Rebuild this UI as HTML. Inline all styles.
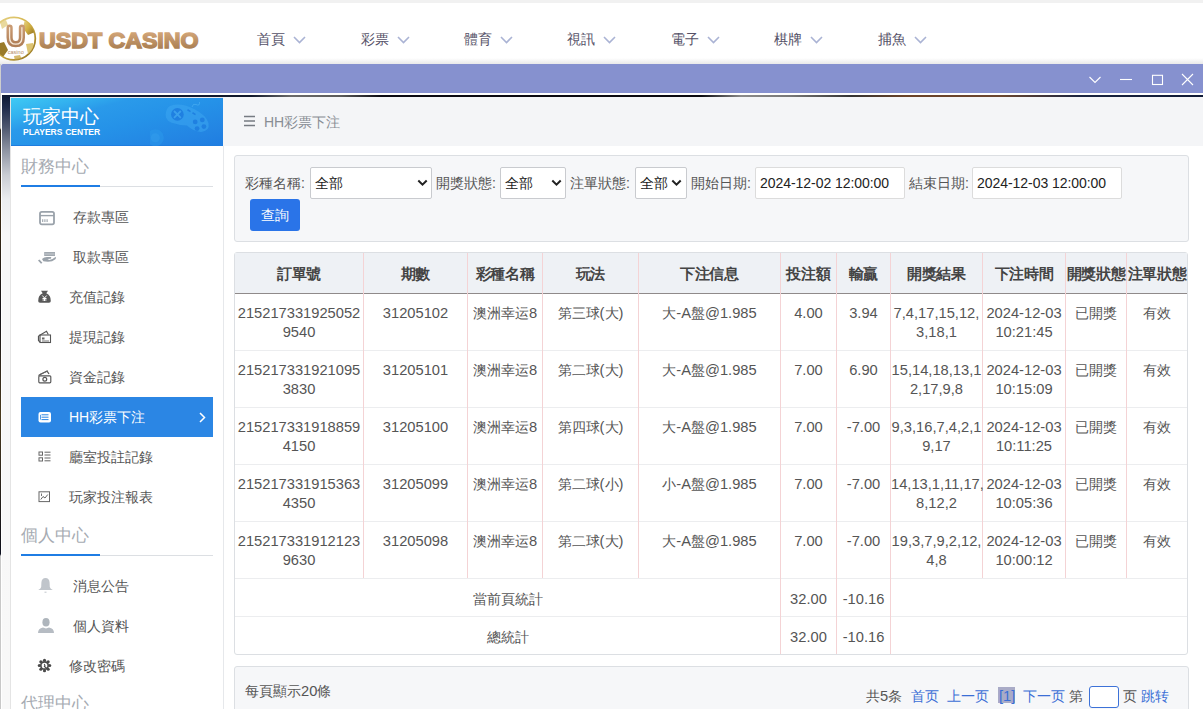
<!DOCTYPE html>
<html><head><meta charset="utf-8"><style>
*{box-sizing:border-box;margin:0;padding:0}
html,body{width:1203px;height:709px;overflow:hidden;background:#fff;font-family:"Liberation Sans",sans-serif;color:#333}
div,span,svg{position:absolute}
b.n{font-weight:inherit;font-size:14.7px;position:static}
.t{white-space:nowrap}
</style></head><body>
<div style="left:0;top:0;width:1203px;height:3px;background:#f1f1f1"></div>
<div style="left:0;top:58px;width:1203px;height:6px;background:linear-gradient(#fff,#e9e9e9)"></div>
<svg style="left:0;top:14px" width="210" height="50" viewBox="0 0 210 50">
<defs>
<linearGradient id="gold" x1="0" y1="0" x2="0" y2="1"><stop offset="0" stop-color="#dcae80"/><stop offset="1" stop-color="#9e7448"/></linearGradient>
<linearGradient id="ballg" x1="0" y1="0" x2="1" y2="1"><stop offset="0" stop-color="#e8d690"/><stop offset=".5" stop-color="#d2b144"/><stop offset="1" stop-color="#8a6a1c"/></linearGradient>
<clipPath id="bc"><circle cx="14" cy="24.6" r="21"/></clipPath><linearGradient id="ug" x1="0" y1="0" x2="0" y2="1"><stop offset="0" stop-color="#c99a72"/><stop offset="1" stop-color="#b07f58"/></linearGradient>
</defs>
<circle cx="14" cy="24.6" r="21.3" fill="#fff" stroke="url(#ballg)" stroke-width="1.8"/>
<g clip-path="url(#bc)"><path d="M25 5 L34 9 L35 18 L28 21 L23 14 Z" fill="url(#ballg)"/>
<path d="M-4 30 L4 28 L8 36 L3 43 L-4 40 Z" fill="#9a7a28"/>
<path d="M26 30 L33 29 L34 36 L28 40 Z" fill="#d9bf64" opacity=".9"/>
<path d="M0 8 L6 6 L8 11 L2 15 Z" fill="#e3cf86" opacity=".8"/>
<path d="M14 42 L20 41 L22 46 L15 47 Z" fill="#caa94a" opacity=".8"/></g>
<path d="M9.6 13.7 V23.5 Q9.6 30.2 15.75 30.2 Q21.9 30.2 21.9 23.5 V13.7" stroke="url(#ug)" stroke-width="6.2" fill="none" stroke-linecap="round"/>
<path d="M9.6 13.7 V23.5 Q9.6 30.2 15.75 30.2 Q21.9 30.2 21.9 23.5 V13.7" stroke="#f6eadb" stroke-width="1.3" fill="none" stroke-linecap="round"/>
<text x="15.75" y="39.5" font-size="5.5" fill="#b58a62" text-anchor="middle" font-family="Liberation Sans">casino</text>
<text x="39" y="34.4" font-family="Liberation Sans" font-weight="bold" font-size="22" fill="url(#gold)" stroke="url(#gold)" stroke-width="1.5" textLength="159.5" lengthAdjust="spacingAndGlyphs">USDT CASINO</text>
</svg>
<span class="t" style="left:257px;top:30px;font-size:14px;line-height:18px;color:#555167">首頁</span>
<svg style="left:293px;top:36px" width="13" height="8" viewBox="0 0 13 8"><path d="M1 1 L6.5 6.5 L12 1" stroke="#aab3d4" stroke-width="1.6" fill="none"/></svg>
<span class="t" style="left:361px;top:30px;font-size:14px;line-height:18px;color:#555167">彩票</span>
<svg style="left:397px;top:36px" width="13" height="8" viewBox="0 0 13 8"><path d="M1 1 L6.5 6.5 L12 1" stroke="#aab3d4" stroke-width="1.6" fill="none"/></svg>
<span class="t" style="left:464px;top:30px;font-size:14px;line-height:18px;color:#555167">體育</span>
<svg style="left:500px;top:36px" width="13" height="8" viewBox="0 0 13 8"><path d="M1 1 L6.5 6.5 L12 1" stroke="#aab3d4" stroke-width="1.6" fill="none"/></svg>
<span class="t" style="left:567px;top:30px;font-size:14px;line-height:18px;color:#555167">視訊</span>
<svg style="left:603px;top:36px" width="13" height="8" viewBox="0 0 13 8"><path d="M1 1 L6.5 6.5 L12 1" stroke="#aab3d4" stroke-width="1.6" fill="none"/></svg>
<span class="t" style="left:671px;top:30px;font-size:14px;line-height:18px;color:#555167">電子</span>
<svg style="left:707px;top:36px" width="13" height="8" viewBox="0 0 13 8"><path d="M1 1 L6.5 6.5 L12 1" stroke="#aab3d4" stroke-width="1.6" fill="none"/></svg>
<span class="t" style="left:774px;top:30px;font-size:14px;line-height:18px;color:#555167">棋牌</span>
<svg style="left:810px;top:36px" width="13" height="8" viewBox="0 0 13 8"><path d="M1 1 L6.5 6.5 L12 1" stroke="#aab3d4" stroke-width="1.6" fill="none"/></svg>
<span class="t" style="left:878px;top:30px;font-size:14px;line-height:18px;color:#555167">捕魚</span>
<svg style="left:914px;top:36px" width="13" height="8" viewBox="0 0 13 8"><path d="M1 1 L6.5 6.5 L12 1" stroke="#aab3d4" stroke-width="1.6" fill="none"/></svg>
<div style="left:0;top:64px;width:1px;height:645px;background:linear-gradient(#d0d0d0 0,#c8c8c8 64px,#2a2116 66px,#3a2a14 150px,#16141a 250px,#4a3a1e 350px,#101018 480px,#0c1020 490px,#c8c8c8 492px,#c8c8c8 645px)"></div>
<div style="left:1px;top:64px;width:1202px;height:30px;background:#8691cf;border-top-left-radius:2px"></div>
<div style="left:1px;top:93px;width:1202px;height:2px;background:#fff"></div>
<svg style="left:1085px;top:70px" width="118" height="20" viewBox="0 0 118 20">
<path d="M4.5 7 L10 12.5 L15.5 7" stroke="#fff" stroke-width="1.1" fill="none"/>
<path d="M35 9.5 H47" stroke="#fff" stroke-width="1.1"/>
<rect x="67.5" y="5.3" width="10" height="9.2" stroke="#fff" stroke-width="1.1" fill="none"/>
<path d="M97 4 L108 15 M108 4 L97 15" stroke="#fff" stroke-width="1.1"/>
</svg>
<div style="left:1px;top:95px;width:1202px;height:2px;background:linear-gradient(90deg,#0f1a33 0,#10182c 250px,#6a6a6a 290px,#5a5a5a 340px,#0a0a12 380px,#0a0a10 700px,#8a8a8a 740px,#777 790px,#333 850px,#6a4228 905px,#6a4630 1000px,#1a2440 1080px,#0f1a36 1202px)"></div>
<div style="left:1px;top:95px;width:1px;height:614px;background:#fff"></div>
<div style="left:2px;top:95px;width:8px;height:614px;background:linear-gradient(#0d1833 0,#1e2a4a 12px,#4d566e 32px,#8d93a2 55px,#c9ccd3 80px,#eceef0 105px,#f7f7f8 140px,#f8f8f8 614px)"></div>
<div style="left:10px;top:97px;width:214px;height:612px;background:#fff;border-left:1px solid #e4e4e4;border-right:1px solid #e6e8eb"></div>
<div style="left:10px;top:97px;width:213px;height:1px;background:#e8eaee"></div><div style="left:11px;top:98px;width:212px;height:48px;background:linear-gradient(165deg,#3fcaf4 0%,#33b2ef 18%,#2a9aea 32%,#2592e8 55%,#2384e3 85%,#1f7de1 100%);border-bottom:1px solid #1f7ddf"></div>
<svg style="left:150px;top:97px" width="73" height="49" viewBox="0 0 73 49">
<path d="M20 9 Q30 5 44 12 Q56 18 58.5 26 Q60 34 51 35 Q43 34 37 28.5 Q28 28 21 25.5 Q14 22 16 15 Q17 10.5 20 9 Z" fill="#3da6f0" opacity=".55"/>
<circle cx="27.4" cy="17.4" r="6.3" fill="#1f80e1"/>
<path d="M24 14 L30.8 20.8 M30.8 14 L24 20.8" stroke="#3a9fec" stroke-width="1.8"/>
<g fill="#1f80e1"><circle cx="45.2" cy="24.9" r="2.4"/><circle cx="52.3" cy="22.9" r="2.4"/><circle cx="47.1" cy="31.6" r="2.4"/><circle cx="53.9" cy="29.6" r="2.4"/></g>
<path d="M37.5 12.8 L40.5 14.6 M42.5 15.8 L45.5 17.6" stroke="#1f80e1" stroke-width="1.6"/>
<path d="M42 10 Q43 6 46 7.5 Q50 9.5 49.5 5" stroke="#49aef2" stroke-width="1" fill="none" opacity=".7"/>
<circle cx="5.3" cy="40.7" r="8.5" fill="#2d9bec" opacity=".45"/>
<circle cx="5.3" cy="40.7" r="4.5" fill="#3aa4ee" opacity=".35"/>
</svg>
<span class="t" style="left:23px;top:105px;font-size:19px;line-height:24px;color:#fff">玩家中心</span>
<span class="t" style="left:23px;top:127px;font-size:8.5px;line-height:10px;color:#fff;font-weight:bold;word-spacing:0.5px">PLAYERS CENTER</span>
<span class="t" style="left:21px;top:157px;font-size:17px;line-height:20px;color:#a6abb2">財務中心</span>
<div style="left:21px;top:186px;width:192px;height:1px;background:#dcdfe3"></div>
<div style="left:21px;top:185px;width:79px;height:2px;background:#1f7de4"></div>
<span class="t" style="left:21px;top:526px;font-size:17px;line-height:20px;color:#a6abb2">個人中心</span>
<div style="left:21px;top:555px;width:192px;height:1px;background:#dcdfe3"></div>
<div style="left:21px;top:554px;width:79px;height:2px;background:#1f7de4"></div>
<span class="t" style="left:21px;top:694px;font-size:17px;line-height:20px;color:#a6abb2">代理中心</span>
<svg style="left:38px;top:210px" width="18" height="16" viewBox="0 0 18 16"><rect x="2" y="1.8" width="14" height="12.5" rx="1.8" stroke="#9aa2aa" stroke-width="1.8" fill="none"/><path d="M2 5.6 H16" stroke="#9aa2aa" stroke-width="1.4"/><path d="M4.7 9.2 V12 M6.9 9.2 V12 M9.1 9.2 V12" stroke="#9aa2aa" stroke-width="1.1"/></svg>
<span class="t" style="left:73px;top:207px;font-size:14px;line-height:20px;color:#555">存款專區</span>
<svg style="left:37px;top:250px" width="20" height="16" viewBox="0 0 20 16"><rect x="7.2" y="2" width="10.8" height="4" fill="#a2a9b0"/><rect x="7.6" y="3.3" width="10" height="1.4" fill="#bcc2c8"/><path d="M5 9 Q7 7 10 6.9 L13.8 7.1 Q15 7.8 13.8 8.8 L10.5 9.1 Q11 9.9 12.5 9.9 Q15.5 9.6 18.4 7.1 Q19.8 7.6 18.4 9.3 Q15.5 11.8 11 11.8 Q8 11.6 6.3 11.3 Z" fill="#9aa2aa"/><path d="M1 10.4 L2.4 9.4 L5.4 12.7 L4 13.8 Z" fill="#9aa2aa"/></svg>
<span class="t" style="left:73px;top:247px;font-size:14px;line-height:20px;color:#555">取款專區</span>
<svg style="left:37px;top:290px" width="15" height="14" viewBox="0 0 15 14"><path d="M4 0.8 L11 0.8 L9.3 3.3 Q14 5.5 13.8 11 Q13.8 12.8 12 12.8 H3 Q1.2 12.8 1.2 11 Q1 5.5 5.7 3.3 Z" fill="#585858"/><path d="M5.3 5.5 L7.5 8 L9.7 5.5 M7.5 8 V11 M5.5 8.5 H9.5 M5.5 10 H9.5" stroke="#fff" stroke-width="1" fill="none"/></svg>
<span class="t" style="left:69px;top:287px;font-size:14px;line-height:20px;color:#555">充值記錄</span>
<svg style="left:37px;top:330px" width="15" height="14" viewBox="0 0 15 14"><path d="M1.5 6 L9.5 1.2 L11.3 4.5" stroke="#555" stroke-width="1.1" fill="none"/><rect x="3" y="5" width="10.5" height="7.5" stroke="#555" stroke-width="1.1" fill="none"/><path d="M1.5 6 V10.5 L3 12" stroke="#555" stroke-width="1.2" fill="none"/><rect x="5" y="7.5" width="2.5" height="2" fill="#666"/><path d="M5 11 H12" stroke="#777" stroke-width="1"/></svg>
<span class="t" style="left:69px;top:327px;font-size:14px;line-height:20px;color:#555">提現記錄</span>
<svg style="left:37px;top:370px" width="15" height="14" viewBox="0 0 15 14"><path d="M1.5 5.5 L10 1 L12 4" stroke="#555" stroke-width="1.3" fill="none"/><path d="M2.5 4.5 L11 1" stroke="#666" stroke-width="1" fill="none"/><rect x="1.8" y="5.8" width="12" height="7" rx="1" stroke="#555" stroke-width="1.15" fill="none"/><circle cx="7.8" cy="9.3" r="1.9" stroke="#555" stroke-width="1.2" fill="none"/></svg>
<span class="t" style="left:69px;top:367px;font-size:14px;line-height:20px;color:#555">資金記錄</span>
<div style="left:21px;top:397px;width:192px;height:40px;background:#2b86e4"></div>
<svg style="left:198px;top:412px" width="9" height="11" viewBox="0 0 9 11"><path d="M2 1 L6.5 5.5 L2 10" stroke="#fff" stroke-width="1.5" fill="none"/></svg>
<svg style="left:37px;top:411px" width="15" height="13" viewBox="0 0 15 13"><rect x="1.5" y="1" width="12.5" height="10.5" rx="2" fill="#fff"/><path d="M4.5 3.8 H11.5 M4.5 6.2 H11.5 M4.5 8.6 H11.5" stroke="#2b86e4" stroke-width="1"/><path d="M3.5 3.8 V8.6" stroke="#2b86e4" stroke-width="0.8"/></svg>
<span class="t" style="left:69px;top:407px;font-size:14px;line-height:20px;color:#fff">HH彩票下注</span>
<svg style="left:37px;top:450px" width="15" height="13" viewBox="0 0 15 13"><rect x="2" y="2" width="3.5" height="3.2" stroke="#666" stroke-width="1" fill="none"/><rect x="2" y="7.8" width="3.5" height="3.2" stroke="#666" stroke-width="1" fill="none"/><path d="M7.5 2.2 H13.5 M7.5 5 H13.5 M7.5 8 H13.5 M7.5 10.8 H13.5" stroke="#666" stroke-width="1"/></svg>
<span class="t" style="left:69px;top:447px;font-size:14px;line-height:20px;color:#555">廳室投註記錄</span>
<svg style="left:37px;top:490px" width="15" height="13" viewBox="0 0 15 13"><rect x="2" y="1.8" width="10.5" height="9.8" stroke="#666" stroke-width="1" fill="none"/><path d="M3.8 9.5 L6 6.5 L8 8 L10.8 4.5" stroke="#666" stroke-width="1" fill="none"/><path d="M4.5 3.5 V6" stroke="#666" stroke-width="0.9"/></svg>
<span class="t" style="left:69px;top:487px;font-size:14px;line-height:20px;color:#555">玩家投注報表</span>
<svg style="left:37px;top:577px" width="17" height="17" viewBox="0 0 17 17"><path d="M8.5 1 Q12.3 1 12.6 5.5 L12.8 10 Q13.3 12 15.8 13 H1.2 Q3.7 12 4.2 10 L4.4 5.5 Q4.7 1 8.5 1 Z" fill="#c0c5cb"/><path d="M7.5 15.2 H9.5" stroke="#c0c5cb" stroke-width="1"/></svg>
<span class="t" style="left:73px;top:576px;font-size:14px;line-height:20px;color:#555">消息公告</span>
<svg style="left:37px;top:617px" width="18" height="17" viewBox="0 0 18 17"><ellipse cx="9" cy="5.3" rx="3.6" ry="4.3" fill="#aeb5bc"/><path d="M1 16 Q1 11.5 6 10.6 L9 11.5 L12 10.6 Q17 11.5 17 16 Z" fill="#b6bcc3"/></svg>
<span class="t" style="left:73px;top:616px;font-size:14px;line-height:20px;color:#555">個人資料</span>
<svg style="left:37px;top:658px" width="15" height="15" viewBox="0 0 15 15"><g fill="#4a4a4a"><circle cx="7.50" cy="2.30" r="1.55"/><circle cx="11.18" cy="3.82" r="1.55"/><circle cx="12.70" cy="7.50" r="1.55"/><circle cx="11.18" cy="11.18" r="1.55"/><circle cx="7.50" cy="12.70" r="1.55"/><circle cx="3.82" cy="11.18" r="1.55"/><circle cx="2.30" cy="7.50" r="1.55"/><circle cx="3.82" cy="3.82" r="1.55"/></g><circle cx="7.5" cy="7.5" r="3.7" stroke="#4a4a4a" stroke-width="1.7" fill="#fff"/><path d="M7.2 6.2 Q8.5 7.5 7.5 8.5 L11 11.5" stroke="#4a4a4a" stroke-width="1.2" fill="none"/></svg>
<span class="t" style="left:69px;top:656px;font-size:14px;line-height:20px;color:#555">修改密碼</span>
<div style="left:223px;top:97px;width:980px;height:49px;background:#f4f5f7"></div>
<svg style="left:243px;top:115px" width="13" height="12" viewBox="0 0 13 12"><path d="M1 1.5 H12 M1 6 H12 M1 10.5 H12" stroke="#767b82" stroke-width="1.6"/></svg>
<span class="t" style="left:264px;top:112px;font-size:14px;line-height:20px;color:#888d94">HH彩票下注</span>
<div style="left:234px;top:155px;width:955px;height:87px;background:#f6f7f9;border:1px solid #dcdfe3;border-radius:3px"></div>
<span class="t" style="left:245px;top:173px;font-size:14px;line-height:20px;color:#555">彩種名稱:</span>
<div style="left:310px;top:167px;width:122px;height:32px;background:#fff;border:1px solid #c9cbcf;border-radius:2px"></div>
<span class="t" style="left:315px;top:173px;font-size:14px;line-height:20px;color:#222">全部</span>
<svg style="left:417px;top:179px" width="11" height="8" viewBox="0 0 11 8"><path d="M1.3 1.5 L5.5 5.7 L9.7 1.5" stroke="#222" stroke-width="2" fill="none"/></svg>
<span class="t" style="left:436px;top:173px;font-size:14px;line-height:20px;color:#555">開獎狀態:</span>
<div style="left:500px;top:167px;width:66px;height:32px;background:#fff;border:1px solid #c9cbcf;border-radius:2px"></div>
<span class="t" style="left:505px;top:173px;font-size:14px;line-height:20px;color:#222">全部</span>
<svg style="left:551px;top:179px" width="11" height="8" viewBox="0 0 11 8"><path d="M1.3 1.5 L5.5 5.7 L9.7 1.5" stroke="#222" stroke-width="2" fill="none"/></svg>
<span class="t" style="left:570px;top:173px;font-size:14px;line-height:20px;color:#555">注單狀態:</span>
<div style="left:635px;top:167px;width:52px;height:32px;background:#fff;border:1px solid #c9cbcf;border-radius:2px"></div>
<span class="t" style="left:640px;top:173px;font-size:14px;line-height:20px;color:#222">全部</span>
<svg style="left:671px;top:179px" width="11" height="8" viewBox="0 0 11 8"><path d="M1.3 1.5 L5.5 5.7 L9.7 1.5" stroke="#222" stroke-width="2" fill="none"/></svg>
<span class="t" style="left:691px;top:173px;font-size:14px;line-height:20px;color:#555">開始日期:</span>
<div style="left:755px;top:167px;width:150px;height:32px;background:#fff;border:1px solid #dcdcdc;border-radius:2px"></div>
<span class="t" style="left:760px;top:174px;font-size:14px;line-height:18px;color:#222;letter-spacing:-0.05px">2024-12-02 12:00:00</span>
<span class="t" style="left:909px;top:173px;font-size:14px;line-height:20px;color:#555">結束日期:</span>
<div style="left:972px;top:167px;width:150px;height:32px;background:#fff;border:1px solid #dcdcdc;border-radius:2px"></div>
<span class="t" style="left:977px;top:174px;font-size:14px;line-height:18px;color:#222;letter-spacing:-0.05px">2024-12-03 12:00:00</span>
<div style="left:250px;top:199px;width:50px;height:32px;background:#2a74e8;border-radius:3px"></div>
<span class="t" style="left:261px;top:205px;font-size:14px;line-height:20px;color:#fff">查詢</span>
<div style="left:234px;top:252px;width:954px;height:403px;background:#fff;border:1px solid #dcdfe3;border-radius:3px;overflow:hidden"></div>
<div style="left:235px;top:253px;width:952px;height:40px;background:#eef1f5"></div>
<div style="left:235px;top:293px;width:952px;height:1px;background:#8f8a8a"></div>
<div style="left:235px;top:350px;width:952px;height:1px;background:#ecedef"></div>
<div style="left:235px;top:407px;width:952px;height:1px;background:#ecedef"></div>
<div style="left:235px;top:464px;width:952px;height:1px;background:#ecedef"></div>
<div style="left:235px;top:521px;width:952px;height:1px;background:#ecedef"></div>
<div style="left:235px;top:578px;width:952px;height:1px;background:#ecedef"></div>
<div style="left:235px;top:616px;width:952px;height:1px;background:#ecedef"></div>
<div style="left:363px;top:253px;width:1px;height:325px;background:#f4d3d5"></div>
<div style="left:467px;top:253px;width:1px;height:325px;background:#f4d3d5"></div>
<div style="left:542px;top:253px;width:1px;height:325px;background:#f4d3d5"></div>
<div style="left:638px;top:253px;width:1px;height:325px;background:#f4d3d5"></div>
<div style="left:780px;top:253px;width:1px;height:401px;background:#f4d3d5"></div>
<div style="left:836px;top:253px;width:1px;height:401px;background:#f4d3d5"></div>
<div style="left:890px;top:253px;width:1px;height:401px;background:#f4d3d5"></div>
<div style="left:982px;top:253px;width:1px;height:325px;background:#f4d3d5"></div>
<div style="left:1065px;top:253px;width:1px;height:325px;background:#f4d3d5"></div>
<div style="left:1126px;top:253px;width:1px;height:325px;background:#f4d3d5"></div>
<div class="t" style="left:235px;top:264px;width:128px;text-align:center;font-size:15px;line-height:20px;font-weight:bold;color:#444;letter-spacing:-0.3px">訂單號</div>
<div class="t" style="left:364px;top:264px;width:103px;text-align:center;font-size:15px;line-height:20px;font-weight:bold;color:#444;letter-spacing:-0.3px">期數</div>
<div class="t" style="left:468px;top:264px;width:74px;text-align:center;font-size:15px;line-height:20px;font-weight:bold;color:#444;letter-spacing:-0.3px">彩種名稱</div>
<div class="t" style="left:543px;top:264px;width:95px;text-align:center;font-size:15px;line-height:20px;font-weight:bold;color:#444;letter-spacing:-0.3px">玩法</div>
<div class="t" style="left:639px;top:264px;width:141px;text-align:center;font-size:15px;line-height:20px;font-weight:bold;color:#444;letter-spacing:-0.3px">下注信息</div>
<div class="t" style="left:781px;top:264px;width:55px;text-align:center;font-size:15px;line-height:20px;font-weight:bold;color:#444;letter-spacing:-0.3px">投注額</div>
<div class="t" style="left:837px;top:264px;width:53px;text-align:center;font-size:15px;line-height:20px;font-weight:bold;color:#444;letter-spacing:-0.3px">輸贏</div>
<div class="t" style="left:891px;top:264px;width:91px;text-align:center;font-size:15px;line-height:20px;font-weight:bold;color:#444;letter-spacing:-0.3px">開獎結果</div>
<div class="t" style="left:983px;top:264px;width:82px;text-align:center;font-size:15px;line-height:20px;font-weight:bold;color:#444;letter-spacing:-0.3px">下注時間</div>
<div class="t" style="left:1066px;top:264px;width:60px;text-align:center;font-size:15px;line-height:20px;font-weight:bold;color:#444;letter-spacing:-0.3px">開獎狀態</div>
<div class="t" style="left:1127px;top:264px;width:60px;text-align:center;font-size:15px;line-height:20px;font-weight:bold;color:#444;letter-spacing:-0.3px">注單狀態</div>
<div class="t" style="left:235px;top:304px;width:128px;text-align:center;font-size:14px;line-height:19px;color:#555"><b class="n">215217331925052</b><br><b class="n">9540</b></div>
<div class="t" style="left:364px;top:304px;width:103px;text-align:center;font-size:14px;line-height:19px;color:#555"><b class="n">31205102</b></div>
<div class="t" style="left:468px;top:304px;width:74px;text-align:center;font-size:14px;line-height:19px;color:#555">澳洲幸运<b class="n">8</b></div>
<div class="t" style="left:543px;top:304px;width:95px;text-align:center;font-size:14px;line-height:19px;color:#555">第三球<b class="n">(</b>大<b class="n">)</b></div>
<div class="t" style="left:639px;top:304px;width:141px;text-align:center;font-size:14px;line-height:19px;color:#555">大<b class="n">-A</b>盤<b class="n">@1.985</b></div>
<div class="t" style="left:781px;top:304px;width:55px;text-align:center;font-size:14px;line-height:19px;color:#555"><b class="n">4.00</b></div>
<div class="t" style="left:837px;top:304px;width:53px;text-align:center;font-size:14px;line-height:19px;color:#555"><b class="n">3.94</b></div>
<div class="t" style="left:891px;top:304px;width:91px;text-align:center;font-size:14px;line-height:19px;color:#555"><b class="n">7,4,17,15,12,</b><br><b class="n">3,18,1</b></div>
<div class="t" style="left:983px;top:304px;width:82px;text-align:center;font-size:14px;line-height:19px;color:#555"><b class="n">2024-12-03</b><br><b class="n">10:21:45</b></div>
<div class="t" style="left:1066px;top:304px;width:60px;text-align:center;font-size:14px;line-height:19px;color:#555">已開獎</div>
<div class="t" style="left:1127px;top:304px;width:60px;text-align:center;font-size:14px;line-height:19px;color:#555">有效</div>
<div class="t" style="left:235px;top:361px;width:128px;text-align:center;font-size:14px;line-height:19px;color:#555"><b class="n">215217331921095</b><br><b class="n">3830</b></div>
<div class="t" style="left:364px;top:361px;width:103px;text-align:center;font-size:14px;line-height:19px;color:#555"><b class="n">31205101</b></div>
<div class="t" style="left:468px;top:361px;width:74px;text-align:center;font-size:14px;line-height:19px;color:#555">澳洲幸运<b class="n">8</b></div>
<div class="t" style="left:543px;top:361px;width:95px;text-align:center;font-size:14px;line-height:19px;color:#555">第二球<b class="n">(</b>大<b class="n">)</b></div>
<div class="t" style="left:639px;top:361px;width:141px;text-align:center;font-size:14px;line-height:19px;color:#555">大<b class="n">-A</b>盤<b class="n">@1.985</b></div>
<div class="t" style="left:781px;top:361px;width:55px;text-align:center;font-size:14px;line-height:19px;color:#555"><b class="n">7.00</b></div>
<div class="t" style="left:837px;top:361px;width:53px;text-align:center;font-size:14px;line-height:19px;color:#555"><b class="n">6.90</b></div>
<div class="t" style="left:891px;top:361px;width:91px;text-align:center;font-size:14px;line-height:19px;color:#555"><b class="n">15,14,18,13,1</b><br><b class="n">2,17,9,8</b></div>
<div class="t" style="left:983px;top:361px;width:82px;text-align:center;font-size:14px;line-height:19px;color:#555"><b class="n">2024-12-03</b><br><b class="n">10:15:09</b></div>
<div class="t" style="left:1066px;top:361px;width:60px;text-align:center;font-size:14px;line-height:19px;color:#555">已開獎</div>
<div class="t" style="left:1127px;top:361px;width:60px;text-align:center;font-size:14px;line-height:19px;color:#555">有效</div>
<div class="t" style="left:235px;top:418px;width:128px;text-align:center;font-size:14px;line-height:19px;color:#555"><b class="n">215217331918859</b><br><b class="n">4150</b></div>
<div class="t" style="left:364px;top:418px;width:103px;text-align:center;font-size:14px;line-height:19px;color:#555"><b class="n">31205100</b></div>
<div class="t" style="left:468px;top:418px;width:74px;text-align:center;font-size:14px;line-height:19px;color:#555">澳洲幸运<b class="n">8</b></div>
<div class="t" style="left:543px;top:418px;width:95px;text-align:center;font-size:14px;line-height:19px;color:#555">第四球<b class="n">(</b>大<b class="n">)</b></div>
<div class="t" style="left:639px;top:418px;width:141px;text-align:center;font-size:14px;line-height:19px;color:#555">大<b class="n">-A</b>盤<b class="n">@1.985</b></div>
<div class="t" style="left:781px;top:418px;width:55px;text-align:center;font-size:14px;line-height:19px;color:#555"><b class="n">7.00</b></div>
<div class="t" style="left:837px;top:418px;width:53px;text-align:center;font-size:14px;line-height:19px;color:#555"><b class="n">-7.00</b></div>
<div class="t" style="left:891px;top:418px;width:91px;text-align:center;font-size:14px;line-height:19px;color:#555"><b class="n">9,3,16,7,4,2,1</b><br><b class="n">9,17</b></div>
<div class="t" style="left:983px;top:418px;width:82px;text-align:center;font-size:14px;line-height:19px;color:#555"><b class="n">2024-12-03</b><br><b class="n">10:11:25</b></div>
<div class="t" style="left:1066px;top:418px;width:60px;text-align:center;font-size:14px;line-height:19px;color:#555">已開獎</div>
<div class="t" style="left:1127px;top:418px;width:60px;text-align:center;font-size:14px;line-height:19px;color:#555">有效</div>
<div class="t" style="left:235px;top:475px;width:128px;text-align:center;font-size:14px;line-height:19px;color:#555"><b class="n">215217331915363</b><br><b class="n">4350</b></div>
<div class="t" style="left:364px;top:475px;width:103px;text-align:center;font-size:14px;line-height:19px;color:#555"><b class="n">31205099</b></div>
<div class="t" style="left:468px;top:475px;width:74px;text-align:center;font-size:14px;line-height:19px;color:#555">澳洲幸运<b class="n">8</b></div>
<div class="t" style="left:543px;top:475px;width:95px;text-align:center;font-size:14px;line-height:19px;color:#555">第二球<b class="n">(</b>小<b class="n">)</b></div>
<div class="t" style="left:639px;top:475px;width:141px;text-align:center;font-size:14px;line-height:19px;color:#555">小<b class="n">-A</b>盤<b class="n">@1.985</b></div>
<div class="t" style="left:781px;top:475px;width:55px;text-align:center;font-size:14px;line-height:19px;color:#555"><b class="n">7.00</b></div>
<div class="t" style="left:837px;top:475px;width:53px;text-align:center;font-size:14px;line-height:19px;color:#555"><b class="n">-7.00</b></div>
<div class="t" style="left:891px;top:475px;width:91px;text-align:center;font-size:14px;line-height:19px;color:#555"><b class="n">14,13,1,11,17,</b><br><b class="n">8,12,2</b></div>
<div class="t" style="left:983px;top:475px;width:82px;text-align:center;font-size:14px;line-height:19px;color:#555"><b class="n">2024-12-03</b><br><b class="n">10:05:36</b></div>
<div class="t" style="left:1066px;top:475px;width:60px;text-align:center;font-size:14px;line-height:19px;color:#555">已開獎</div>
<div class="t" style="left:1127px;top:475px;width:60px;text-align:center;font-size:14px;line-height:19px;color:#555">有效</div>
<div class="t" style="left:235px;top:532px;width:128px;text-align:center;font-size:14px;line-height:19px;color:#555"><b class="n">215217331912123</b><br><b class="n">9630</b></div>
<div class="t" style="left:364px;top:532px;width:103px;text-align:center;font-size:14px;line-height:19px;color:#555"><b class="n">31205098</b></div>
<div class="t" style="left:468px;top:532px;width:74px;text-align:center;font-size:14px;line-height:19px;color:#555">澳洲幸运<b class="n">8</b></div>
<div class="t" style="left:543px;top:532px;width:95px;text-align:center;font-size:14px;line-height:19px;color:#555">第二球<b class="n">(</b>大<b class="n">)</b></div>
<div class="t" style="left:639px;top:532px;width:141px;text-align:center;font-size:14px;line-height:19px;color:#555">大<b class="n">-A</b>盤<b class="n">@1.985</b></div>
<div class="t" style="left:781px;top:532px;width:55px;text-align:center;font-size:14px;line-height:19px;color:#555"><b class="n">7.00</b></div>
<div class="t" style="left:837px;top:532px;width:53px;text-align:center;font-size:14px;line-height:19px;color:#555"><b class="n">-7.00</b></div>
<div class="t" style="left:891px;top:532px;width:91px;text-align:center;font-size:14px;line-height:19px;color:#555"><b class="n">19,3,7,9,2,12,</b><br><b class="n">4,8</b></div>
<div class="t" style="left:983px;top:532px;width:82px;text-align:center;font-size:14px;line-height:19px;color:#555"><b class="n">2024-12-03</b><br><b class="n">10:00:12</b></div>
<div class="t" style="left:1066px;top:532px;width:60px;text-align:center;font-size:14px;line-height:19px;color:#555">已開獎</div>
<div class="t" style="left:1127px;top:532px;width:60px;text-align:center;font-size:14px;line-height:19px;color:#555">有效</div>
<div class="t" style="left:235px;top:589px;width:545px;text-align:center;font-size:14px;line-height:20px;color:#555">當前頁統計</div>
<div class="t" style="left:235px;top:627px;width:545px;text-align:center;font-size:14px;line-height:20px;color:#555">總統計</div>
<div class="t" style="left:781px;top:589px;width:55px;text-align:center;font-size:14px;line-height:20px;color:#555"><b class="n">32.00</b></div>
<div class="t" style="left:837px;top:589px;width:53px;text-align:center;font-size:14px;line-height:20px;color:#555"><b class="n">-10.16</b></div>
<div class="t" style="left:781px;top:627px;width:55px;text-align:center;font-size:14px;line-height:20px;color:#555"><b class="n">32.00</b></div>
<div class="t" style="left:837px;top:627px;width:53px;text-align:center;font-size:14px;line-height:20px;color:#555"><b class="n">-10.16</b></div>
<div style="left:234px;top:666px;width:955px;height:60px;background:#f6f7f9;border:1px solid #dcdfe3;border-radius:3px"></div>
<span class="t" style="left:245px;top:681px;font-size:14px;line-height:20px;color:#555">每頁顯示<b class="n">20</b>條</span>
<span class="t" style="left:866px;top:686px;font-size:14px;line-height:20px;color:#555">共<b class="n">5</b>条</span>
<span class="t" style="left:911px;top:686px;font-size:14px;line-height:20px;color:#3b6fd6">首页</span>
<span class="t" style="left:947px;top:686px;font-size:14px;line-height:20px;color:#3b6fd6">上一页</span>
<div style="left:998px;top:687px;width:17px;height:16px;background:#a9abc7"></div>
<span class="t" style="left:999px;top:686px;font-size:14px;line-height:20px;color:#3b6fd6"><b class="n">[1]</b></span>
<span class="t" style="left:1023px;top:686px;font-size:14px;line-height:20px;color:#3b6fd6">下一页</span>
<span class="t" style="left:1069px;top:686px;font-size:14px;line-height:20px;color:#555">第</span>
<div style="left:1089px;top:686px;width:30px;height:22px;background:#fff;border:1px solid #3d72d8;border-radius:3px"></div>
<span class="t" style="left:1123px;top:686px;font-size:14px;line-height:20px;color:#555">页</span>
<span class="t" style="left:1141px;top:686px;font-size:14px;line-height:20px;color:#3b6fd6">跳转</span>
</body></html>
